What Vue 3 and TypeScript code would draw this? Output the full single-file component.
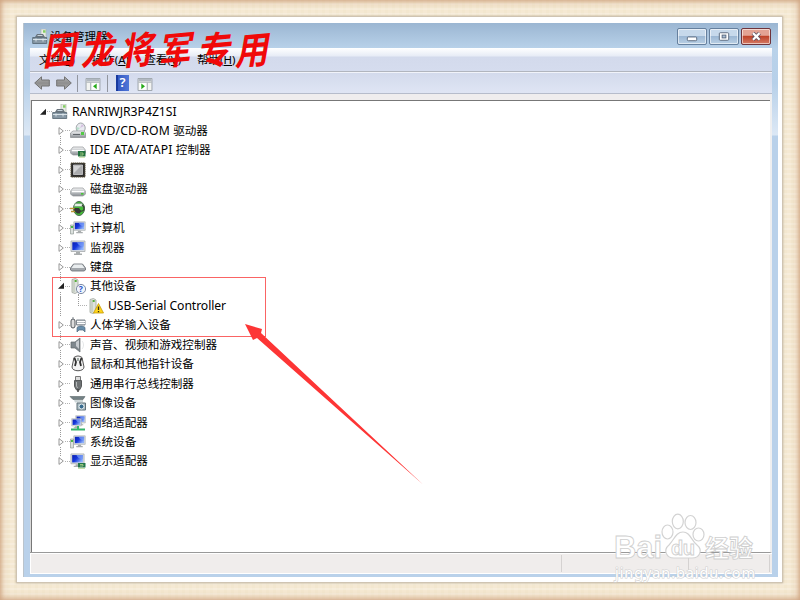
<script setup lang="ts">
interface TreeNode {
  icon: string
  latin?: string
  text?: string
  level: number
  state: 'open' | 'closed' | 'leaf'
}

const menus: { text: string; key: string }[] = [
  { text: '文件', key: 'F' },
  { text: '操作', key: 'A' },
  { text: '查看', key: 'V' },
  { text: '帮助', key: 'H' },
]

const nodes: TreeNode[] = [
  { icon: 'root', latin: 'RANRIWJR3P4Z1SI', level: 0, state: 'open' },
  { icon: 'dvd', latin: 'DVD/CD-ROM ', text: '驱动器', level: 1, state: 'closed' },
  { icon: 'ide', latin: 'IDE ATA/ATAPI ', text: '控制器', level: 1, state: 'closed' },
  { icon: 'cpu', text: '处理器', level: 1, state: 'closed' },
  { icon: 'disk', text: '磁盘驱动器', level: 1, state: 'closed' },
  { icon: 'battery', text: '电池', level: 1, state: 'closed' },
  { icon: 'computer', text: '计算机', level: 1, state: 'closed' },
  { icon: 'monitor', text: '监视器', level: 1, state: 'closed' },
  { icon: 'keyboard', text: '键盘', level: 1, state: 'closed' },
  { icon: 'other', text: '其他设备', level: 1, state: 'open' },
  { icon: 'warn', latin: 'USB-Serial Controller', level: 2, state: 'leaf' },
  { icon: 'hid', text: '人体学输入设备', level: 1, state: 'closed' },
  { icon: 'sound', text: '声音、视频和游戏控制器', level: 1, state: 'closed' },
  { icon: 'mouse', text: '鼠标和其他指针设备', level: 1, state: 'closed' },
  { icon: 'usb', text: '通用串行总线控制器', level: 1, state: 'closed' },
  { icon: 'camera', text: '图像设备', level: 1, state: 'closed' },
  { icon: 'network', text: '网络适配器', level: 1, state: 'closed' },
  { icon: 'computer', text: '系统设备', level: 1, state: 'closed' },
  { icon: 'display', text: '显示适配器', level: 1, state: 'closed' },
]
</script>

<template>
  <div class="frame">
    <svg class="defs" width="0" height="0">
      <defs>
        <linearGradient id="gray" x1="0" y1="0" x2="0" y2="1">
          <stop offset="0" stop-color="#f4f5f6" /><stop offset="1" stop-color="#8b9095" />
        </linearGradient>
        <linearGradient id="blue" x1="0" y1="0" x2="1" y2="0.6">
          <stop offset="0" stop-color="#0a1fae" /><stop offset="0.5" stop-color="#1537dc" /><stop offset="1" stop-color="#8db0fa" />
        </linearGradient>
        <linearGradient id="arrowGray" x1="0" y1="0" x2="0" y2="1">
          <stop offset="0" stop-color="#b5b5b5" /><stop offset="0.5" stop-color="#8e8e8e" /><stop offset="1" stop-color="#acacac" />
        </linearGradient>
      </defs>
      <symbol id="tower" viewBox="0 0 16 16">
        <path d="M9 0h5v9H9z" fill="#e8ece6" stroke="#b0b7ae" stroke-width=".7" />
        <path d="M11 1.200h2.500v2.500H11z" fill="#84cf62" />
        <path d="M3 8l2-3h6l2 3z" fill="#68737c" /><path d="M5.5 6.5h5" stroke="#c5d2da" />
        <path d="M.7 8.5h14v6H.7z" fill="#8798a5" stroke="#53636f" stroke-width=".8" />
        <path d="M1 10.5h14M4 9.5v3M11 9.5v3" stroke="#e0e9ed" stroke-width=".9" />
      </symbol>
      <symbol id="drive" viewBox="0 0 16 16">
        <path d="M3 6h10l2.4 3v3.2L13 14H3L.6 12.2V9z" fill="url(#gray)" stroke="#92969a" stroke-width=".7" />
        <path d="M2 9h12v1.2H2z" fill="#fff" /><path d="M11 11h2.5v1.6H11z" fill="#46c536" />
      </symbol>
      <symbol id="screen" viewBox="0 0 16 16">
        <path d="M1 1h14v10.5H1z" fill="#dce0e2" stroke="#a5aaac" stroke-width=".8" />
        <path d="M2.3 2.2h11.4v7.9H2.3z" fill="url(#blue)" />
        <path d="M7 2.2h6.7v4.4C10 6.2 7.8 5 7 2.2z" fill="#779cf7" opacity=".75" />
        <path d="M6 12h4v1.5h2V15H4v-1.5h2z" fill="#a9adae" />
      </symbol>
    </svg>

    <main class="paper">
      <section class="window">
        <header class="titlebar">
          <svg class="title-icon"><use href="#tower" /></svg>
          <h1>设备管理器</h1>
          <div class="controls">
            <button class="control"><svg viewBox="0 0 28 16"><rect x="9" y="8.5" width="10" height="4" rx="1" fill="#fff" stroke="#59677c" /></svg></button>
            <button class="control"><svg viewBox="0 0 28 16"><rect x="9" y="4" width="10" height="8" rx="1" fill="#fff" stroke="#59677c" /><rect x="12" y="6.5" width="4" height="3" fill="#a8bfd7" stroke="#59677c" /></svg></button>
            <button class="control close"><svg viewBox="0 0 28 16"><path d="M10.8 4.4l7 7M17.8 4.4l-7 7" stroke="#5d5263" stroke-width="4" /><path d="M10.8 4.4l7 7M17.8 4.4l-7 7" stroke="#fff" stroke-width="2.3" /></svg></button>
          </div>
        </header>

        <nav class="menubar">
          <span v-for="m in menus" :key="m.key">{{ m.text }}(<u>{{ m.key }}</u>)</span>
        </nav>
        <div class="toolbar">
          <svg class="nav-arrow" viewBox="0 0 16 14"><path d="M.7 7L7.5.8V4h7.8v6H7.5v3.2z" fill="url(#arrowGray)" stroke="#737373" /></svg>
          <svg class="nav-arrow" viewBox="0 0 16 14"><path d="M15.3 7L8.5.8V4H.7v6h7.8v3.2z" fill="url(#arrowGray)" stroke="#737373" /></svg>
          <i class="separator" />
          <svg class="tool" viewBox="0 0 16 14"><path d="M.5.5h15v13H.5z" fill="#f3f4f2" stroke="#98a0a8" /><path d="M1 1h14v2.5H1z" fill="#b2b9c2" /><path d="M1 4.5h14M5.5 5v8.500" stroke="#a2aab0" /><path d="M7 5.5h7v7H7z" fill="#fff" /><path d="M12 6v6L8 9z" fill="#26aa18" /></svg>
          <i class="separator second" />
          <span class="help">?</span>
          <svg class="tool last" viewBox="0 0 16 14"><path d="M.5.5h15v13H.5z" fill="#f3f4f2" stroke="#98a0a8" /><path d="M1 1h14v2.5H1z" fill="#b2b9c2" /><path d="M1 4.500h14M10.500 5v8.500" stroke="#a2aab0" /><path d="M2 5.500h7v7H2z" fill="#fff" /><path d="M4 6v6l4-3z" fill="#26aa18" /></svg>
        </div>

        <div class="tree">
          <div v-for="(n, i) in nodes" :key="i" class="node" :class="['level-' + n.level, n.state]">
            <span v-if="n.level < 2" class="expander">
              <svg v-if="n.state === 'closed'" viewBox="0 0 6 8"><path d="M1 .6L5.300 4 1 7.400z" fill="#fff" stroke="#8c8c8c" stroke-width=".9" /></svg>
              <svg v-else viewBox="0 0 6 8"><path d="M6 .8v6H0z" fill="#222" /></svg>
            </span>
            <i class="link" />
            <svg class="icon" viewBox="0 0 16 16">
              <use v-if="n.icon === 'root'" href="#tower" />
              <g v-else-if="n.icon === 'dvd'"><ellipse cx="10.700" cy="5" rx="4.500" ry="5" fill="#e8eaf0" stroke="#a1a6a9" /><path d="M10 5l2-4 2 2z" fill="#d4c0df" /><path d="M10 5l-3 3-.5-4z" fill="#b7dfcb" /><path d="M3 8h11l1.500 2v4.500H.5V10z" fill="url(#gray)" stroke="#8a8e91" stroke-width=".7" /><path d="M3 11.500h7" stroke="#60656a" /><path d="M11 9h3v3h-3z" fill="#52c944" /></g>
              <g v-else-if="n.icon === 'ide'"><use href="#drive" y="-1" width="16" height="16" /><path d="M8 9h7.500v5.500H8z" fill="#24733f" /><path d="M10 11h3v2h-3M9 15.300h6" stroke="#b6d58b" fill="none" stroke-width=".8" /></g>
              <g v-else-if="n.icon === 'cpu'"><path d="M1 1h14v14H1z" fill="#2e2e2e" stroke="#574f38" stroke-dasharray="1.500 .5" /><path d="M3.500 3h9v9.500h-9z" fill="#aaabad" stroke="#ddd" stroke-width=".7" /><path d="M4 4h7L4 11z" fill="#d2d3d4" /></g>
              <use v-else-if="n.icon === 'disk'" href="#drive" y="1" width="16" height="16" />
              <g v-else-if="n.icon === 'battery'"><ellipse cx="9" cy="7.500" rx="5.500" ry="7" fill="#43bd35" stroke="#496d50" /><path d="M5 2.500h7l1 3H4z" fill="#e4f1e2" stroke="#71917a" stroke-width=".6" /><path d="M4 7h5l2 3-1 2.500H7l-3-3z" fill="#363736" /><path d="M0 7.500h4.500M1 10.500h4" stroke="#bb9634" stroke-width="1.600" /><path d="M10 10c5 1 5-4 2-6" fill="none" stroke="#3a4039" stroke-width="1.200" /></g>
              <g v-else-if="n.icon === 'computer'"><use href="#screen" x="3" y="0" width="13" height="15" /><path d="M.5 5h3v9h-3z" fill="#dce1de" stroke="#858f89" stroke-width=".6" /><path d="M1 6h2v2H1z" fill="#49b849" /></g>
              <use v-else-if="n.icon === 'monitor'" href="#screen" width="16" height="16" />
              <g v-else-if="n.icon === 'keyboard'"><path d="M3.500 5h9L15.500 9v2L14 12H2L.5 11V9z" fill="#a3a8ad" stroke="#666b71" stroke-width=".8" /><path d="M4 5.600h8L14.500 9h-13z" fill="#e9edef" /></g>
              <g v-else-if="n.icon === 'other' || n.icon === 'warn'"><path d="M2 1.500L5.500.5 8 2v12l-3 1.500-3-1z" fill="#dfe3dd" stroke="#9da39a" stroke-width=".8" /><path d="M4 2v12" stroke="#b4c0ae" /><path d="M4.700 3h2" stroke="#58af3b" stroke-width="2" />
                <g v-if="n.icon === 'other'"><circle cx="11" cy="11" r="4.600" fill="#eff4fd" stroke="#7f8ca5" /><text x="8.700" y="14" font-size="8.500" font-weight="bold" fill="#2854ca">?</text></g>
                <g v-else><path d="M10.500 5.500l5 9.500h-10z" fill="#ffd51c" stroke="#c59a08" stroke-width=".8" /><path d="M10.500 8.500v3.500m0 1v1.300" stroke="#332d12" stroke-width="1.300" /></g>
              </g>
              <g v-else-if="n.icon === 'hid'"><rect x="1" y="2" width="4" height="9" rx="2" fill="#ddd" stroke="#51565a" /><path d="M3 3V0M6.500 3h8.500v5H6.500z" fill="#bac0c5" stroke="#828990" /><path d="M7 4.500h8M7 6.500h8" stroke="#fff" /><path d="M7 15V10.500c2-2 6-2 8 0V15l-2-2H9z" fill="#688eab" stroke="#50687d" stroke-width=".7" /></g>
              <g v-else-if="n.icon === 'sound'"><path d="M1 5h4l5-4v14l-5-4H1z" fill="#7f878d" stroke="#61686c" stroke-width=".7" /><path d="M6 5l3-2v9l-3-3z" fill="#c7cbcf" /><path d="M12 4c2 2 2 6 0 8" fill="none" stroke="#e6e8e9" /></g>
              <g v-else-if="n.icon === 'mouse'"><path d="M4 1.500c3-2 5-2 8 0l2 9.500c0 5-12 5-12 0z" fill="#f3f3f3" stroke="#555" stroke-width="1" /><path d="M4.500 2l1.500 4-1 4M11.500 2L10 6l1 4" fill="none" stroke="#2e2e2e" stroke-width="1.800" /><path d="M7 2h2v3H7z" fill="#a0aba7" /></g>
              <g v-else-if="n.icon === 'usb'"><path d="M5.500.5h5V6h-5z" fill="#ddd" stroke="#777" /><path d="M4.500 4.500h7v6L9.500 14h-3L4.500 10.500z" fill="#6e7274" stroke="#56595a" /><path d="M6.500 6v4l1 2" stroke="#b5b8ba" fill="none" /><path d="M8 13v3" stroke="#444" stroke-width="1.500" /></g>
              <g v-else-if="n.icon === 'camera'"><path d="M0 1.500h15l-2 3H3z" fill="#738185" stroke="#5a6568" stroke-width=".6" /><path d="M4 5h9v2.500H5z" fill="#ccd5d7" /><path d="M7 8h8.500v7H7z" fill="#a9bbc2" stroke="#617178" /><circle cx="11.500" cy="11.500" r="2.500" fill="#386b8f" stroke="#e9eff1" /></g>
              <g v-else-if="n.icon === 'network'"><use href="#screen" x="5" y="0" width="11" height="11" /><use href="#screen" x="1" y="3" width="11" height="11" /><path d="M8 11v3M1 14.500h14" stroke="#34b46b" stroke-width="2" /></g>
              <g v-else><use href="#screen" width="15" height="15" /><path d="M8 10h7.500v4.500H8z" fill="#24784b" /><path d="M10 11.500h3v1.500h-3M8 15.500h7" stroke="#b8d791" fill="none" stroke-width=".8" /></g>
            </svg>
            <span class="label"><span v-if="n.latin" class="latin" :class="{ mixed: n.text }">{{ n.latin }}</span>{{ n.text }}</span>
          </div>
        </div>
        <footer class="status"><i /><i /><i /></footer>
      </section>
    </main>

    <div class="highlight" />
    <svg class="pointer" viewBox="0 0 180 165"><path d="M0 0l17 5-1 4L178 160.500 12 14l-4 2z" fill="#fd3535" /></svg>
    <div class="stamp"><span>困</span><span>龙</span><span>将</span><span>军</span><span>专</span><span>用</span></div>
    <svg class="watermark" viewBox="0 0 150 75">
      <g class="paw">
        <ellipse cx="56.500" cy="20" rx="5.500" ry="7" /><ellipse cx="66.800" cy="9.500" rx="5.500" ry="7.300" /><ellipse cx="79.500" cy="10.500" rx="5.500" ry="7" /><ellipse cx="87.500" cy="22.500" rx="5.500" ry="6.500" />
        <path d="M72 20c-7 0-9 8-14 13-6 5-3 13 5 13 6 0 12 0 18 0 8 0 11-8 5-13-6-5-7-13-14-13z" />
      </g>
      <g class="brand"><text x="3" y="46" font-size="31" textLength="48" lengthAdjust="spacingAndGlyphs">Bai</text><text x="60" y="43" font-size="20" textLength="24">du</text><text x="94" y="44.500" font-size="24" textLength="48">经验</text></g>
      <text class="site" x="4" y="65.500" font-size="14.500" textLength="140">jingyan.baidu.com</text>
    </svg>
  </div>
</template>

<style>
body { overflow: hidden; }
</style>
<style scoped>
* { box-sizing: border-box; }
.frame {
  position: relative; width: 800px; height: 600px; padding: 16px; overflow: hidden;
  background: repeating-linear-gradient(0deg, #fff3 0 2px, transparent 2px 5px), repeating-linear-gradient(90deg, #f3e7cf 0 3px, #f5e9d3 3px 7px);
  box-shadow: inset 0 0 10px #cfa37f, inset 0 0 4px #cda583;
  font-family: "Noto Sans", "Noto Sans CJK SC", sans-serif; color: #000;
}
.defs { position: absolute; }
.paper { width: 767px; height: 567px; padding: 6px; background: #fff; border: 1px solid #cfc4b2; box-shadow: 0 0 2px #b9aa92; }
.window { width: 755px; height: 554px; padding: 0 6px 3px; border-left: 1px solid #bbc4cc; display: flex; flex-direction: column; background: linear-gradient(#9bb6d2, #b9d2ea 26px, #b7d0e9 60px, #dce8f5 112px, #b9d1ea 113px); }
.titlebar { height: 25px; display: flex; align-items: flex-start; padding-left: 2px; flex: none; }
.title-icon { width: 16px; height: 16px; margin-top: 6px; }
h1 { margin: 6px 0 0 2px; font-size: 11.500px; line-height: 16px; font-weight: 400; }
.controls { display: flex; margin: 5px 1px 0 auto; gap: 2px; }
.control { width: 30px; height: 17px; padding: 0; border: 1px solid #66809e; border-radius: 2px; background: linear-gradient(#c7d9eb 45%, #9db8d4 50%, #bad0e5); box-shadow: inset 0 0 0 1px #ffffff90; }
.control svg { display: block; width: 28px; height: 15px; }
.close { border-color: #6f343b; background: linear-gradient(#e3a394 42%, #be4228 48%, #d57b66); }
.menubar { height: 24px; flex: none; display: flex; gap: 13px; padding: 3px 0 0 9px; line-height: 17px; background: linear-gradient(#fff, #e7ecf6 8px, #d3daec 9px, #d5dcee); border-bottom: 1px solid #b1b5be; }
.menubar span { width: 39.700px; white-space: nowrap; font-size: 11.500px; }
.toolbar { height: 22px; flex: none; display: flex; align-items: center; padding: 0 0 0 4px; border-top: 1px solid #f1f3fa; border-bottom: 1px solid #b6bccb; background: linear-gradient(#d3daec, #dfe5f4); }
.nav-arrow { width: 16px; height: 14px; margin-right: 6px; }
.separator { width: 1px; height: 17px; background: #92969f; margin-left: -1px; }
.tool { width: 16px; height: 13px; margin-left: 7px; margin-top: 2px; }
.second { margin-left: 6px; }
.help { width: 13px; height: 16px; margin-left: 8px; color: #fff; font-size: 13px; font-weight: 600; line-height: 15px; text-align: center; background: linear-gradient(90deg, #183a9f 2px, #3459c2 2px, #4f76d8); }
.last { margin-left: 8px; }
.tree { height: 459px; flex: none; border-top: 6px solid #efedee; background: #fff; box-shadow: inset 1px 0 #d9d9d9, inset 2px 1px #777; padding: 1.800px 0 0 12px; border-right: 2px solid #efeff0; border-bottom: 1px solid #999; }
.node { height: 19.440px; display: flex; align-items: center; font-size: 11.550px; white-space: pre; position: relative; }
.level-0 { margin-left: -2px; }
.level-1 { padding-left: 16px; }
.level-2 { padding-left: 35px; }
.expander { width: 6px; height: 8px; display: flex; }
.expander svg { width: 6px; height: 8px; }
.link { width: 6px; height: 1px; background: repeating-linear-gradient(90deg, transparent 0 1px, #b2b2b2 1px 2px); }
.level-2 .link { width: 11px; }
.level-1::after { content: ""; position: absolute; left: 18px; top: 15px; height: 9px; border-left: 1px dotted #999; }
.level-1:last-child::after { display: none; }
.level-2::before { content: ""; position: absolute; left: 18px; top: 0; height: 20px; border-left: 1px dotted #999; }
.level-2::after { content: ""; position: absolute; left: 36px; top: -2px; height: 12px; border-left: 1px dotted #999; }
.icon { width: 16px; height: 16px; flex: none; overflow: visible; }
.label { margin-left: 4px; line-height: 18px; }
.latin { font-size: 12.200px; }
.level-2 .latin { letter-spacing: -.08px; }
.latin.mixed { letter-spacing: .17px; }
.status { flex: 1; border-top: 1px solid #fff; background: #f0edec; border-left: 1px solid #fff; border-bottom: 1px solid #fff; display: flex; padding: 1px 2px 1px 0; }
.status i { width: 531px; border-right: 1px solid #d5d2d1; }
.status i:nth-child(2) { width: 127px; }
.status i:nth-child(3) { flex: 1; }
.highlight { position: absolute; left: 52px; top: 277px; width: 214px; height: 60px; border: 1px solid #fa6464; }
.pointer { position: absolute; left: 245px; top: 324px; width: 180px; height: 165px; }
.stamp { position: absolute; left: 43px; top: 26px; display: flex; color: #f00909; font: bold 38px/44px "Noto Sans CJK SC", sans-serif; }
.stamp span { width: 38.400px; text-align: center; transform: skew(-10deg, -5deg) scaleX(.88); }
.watermark { position: absolute; left: 611px; top: 512px; width: 150px; height: 75px; }
.paw { fill: #fff; stroke: #d3d3d3; stroke-width: 1.200; }
.brand { font-family: "Liberation Sans", "Noto Sans CJK SC", sans-serif; font-weight: bold; fill: #fff; stroke: #cfcfcf; stroke-width: .9; }
.site { font-family: "Noto Sans", sans-serif; fill: #fff; stroke: #d2d2d2; stroke-width: 1.200; paint-order: stroke; }
</style>
